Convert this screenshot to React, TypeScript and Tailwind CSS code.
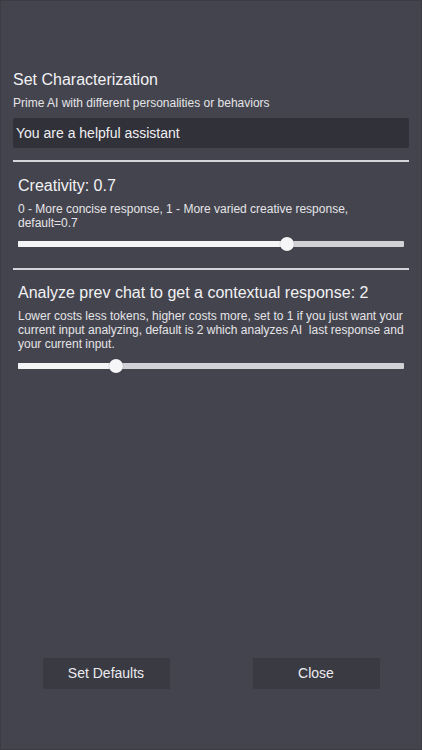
import React from "react";

function Slider({ pct }: { pct: number }) {
  return (
    <div className="relative h-[14px] w-full flex items-center">
      <div className="w-full h-[6px] bg-[#d2d2d6] rounded-[1px] overflow-hidden flex">
        <div className="h-full bg-[#f4f4f6]" style={{ width: `${pct}%` }} />
      </div>
      <div
        className="absolute top-0 w-[14px] h-[14px] rounded-full bg-[#f6f6f8] -ml-[7px] shadow-[0_0_1px_rgba(0,0,0,0.4)]"
        style={{ left: `${pct}%` }}
      />
    </div>
  );
}

export default function App() {
  return (
    <div
      className="h-[750px] w-[422px] bg-[#44444e] border border-[#3c3c45] flex flex-col text-[#ececf0]"
      style={{ fontFamily: '"Liberation Sans", Arial, sans-serif' }}
    >
      <div className="px-[12px] pt-[69px]">
        <div className="text-[16px] leading-[20px] text-[#f2f2f4]">Set Characterization</div>
        <div className="text-[12px] leading-[14px] mt-[6px] text-[#e4e4e8]">
          Prime AI with different personalities or behaviors
        </div>
        <div className="mt-[8px] h-[30px] bg-[#31313a] rounded-[2px] flex items-center px-[3px] text-[14px] text-[#f0f0f2]">
          You are a helpful assistant
        </div>
        <div className="mt-[12px] h-[2px] bg-[#d4d4da]" />
        <div className="px-[5px] pt-[14px]">
          <div className="text-[16px] leading-[20px] text-[#f2f2f4]">Creativity: 0.7</div>
          <div className="text-[12px] leading-[14px] mt-[6px] text-[#e4e4e8]">
            0 - More concise response, 1 - More varied creative response, default=0.7
          </div>
          <div className="mt-[7px]">
            <Slider pct={69.7} />
          </div>
        </div>
        <div className="mt-[17px] h-[2px] bg-[#d4d4da]" />
        <div className="px-[5px] pt-[13px]">
          <div className="text-[16px] leading-[20px] text-[#f2f2f4]">
            Analyze prev chat to get a contextual response: 2
          </div>
          <div className="text-[12px] leading-[14px] mt-[6px] text-[#e4e4e8]">
            Lower costs less tokens, higher costs more, set to 1 if you just want your current input analyzing, default is 2 which analyzes AI&nbsp; last response and your current input.
          </div>
          <div className="mt-[8px]">
            <Slider pct={25.4} />
          </div>
        </div>
      </div>
      <div className="flex-1" />
      <div className="grid grid-cols-2 mb-[60px]">
        <div className="flex justify-center">
          <button className="w-[127px] h-[31px] bg-[#3a3a43] text-[14px] text-[#ececf0]">Set Defaults</button>
        </div>
        <div className="flex justify-center">
          <button className="w-[127px] h-[31px] bg-[#3a3a43] text-[14px] text-[#ececf0]">Close</button>
        </div>
      </div>
    </div>
  );
}
